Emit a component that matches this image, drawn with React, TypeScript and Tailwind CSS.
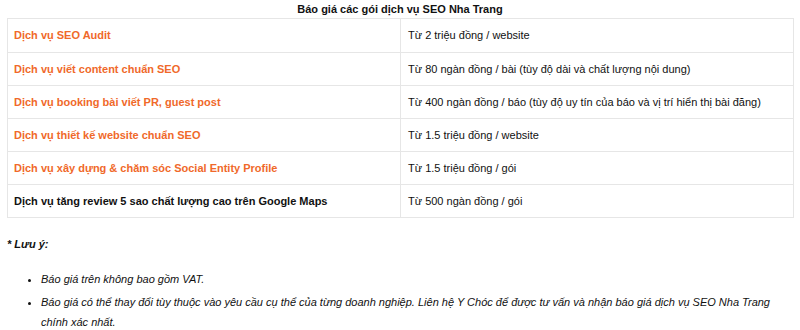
import React from "react";

const rows: { name: string; price: string; orange: boolean }[] = [
  { name: "Dịch vụ SEO Audit", price: "Từ 2 triệu đồng / website", orange: true },
  { name: "Dịch vụ viết content chuẩn SEO", price: "Từ 80 ngàn đồng / bài (tùy độ dài và chất lượng nội dung)", orange: true },
  { name: "Dịch vụ booking bài viết PR, guest post", price: "Từ 400 ngàn đồng / báo (tùy độ uy tín của báo và vị trí hiển thị bài đăng)", orange: true },
  { name: "Dịch vụ thiết kế website chuẩn SEO", price: "Từ 1.5 triệu đồng / website", orange: true },
  { name: "Dịch vụ xây dựng & chăm sóc Social Entity Profile", price: "Từ 1.5 triệu đồng / gói", orange: true },
  { name: "Dịch vụ tăng review 5 sao chất lượng cao trên Google Maps", price: "Từ 500 ngàn đồng / gói", orange: false },
];

export default function App() {
  return (
    <div className="w-[800px] h-[330px] bg-white text-[11px] text-[#111] overflow-hidden" style={{ fontFamily: '"Liberation Sans", Arial, sans-serif' }}>
      <div className="text-center text-[11px] font-bold leading-[18px]">Báo giá các gói dịch vụ SEO Nha Trang</div>
      <div className="mx-[7px] w-[787px] border border-[#e6e6e6]">
        {rows.map((r, i) => (
          <div key={i} className={`grid grid-cols-[393px_1fr] h-[33px] ${i > 0 ? "border-t border-[#e6e6e6]" : ""}`}>
            <div className={`flex items-center pl-[6px] font-bold border-r border-[#e6e6e6] ${r.orange ? "text-[#f0692a]" : "text-[#111]"}`}>
              {r.name}
            </div>
            <div className="flex items-center pl-[7px]">{r.price}</div>
          </div>
        ))}
      </div>
      <div className="pl-[7px] mt-[17px] font-bold italic leading-[18px]">* Lưu ý:</div>
      <ul className="mt-[16px] pl-[41px] list-disc italic leading-[20px] flex flex-col gap-[3px]">
        <li>Báo giá trên không bao gồm VAT.</li>
        <li className="pr-[5px]">
          Báo giá có thể thay đổi tùy thuộc vào yêu cầu cụ thể của từng doanh nghiệp. Liên hệ Y Chóc để được tư vấn và nhận báo giá dịch vụ SEO Nha Trang chính xác nhất.
        </li>
      </ul>
    </div>
  );
}
